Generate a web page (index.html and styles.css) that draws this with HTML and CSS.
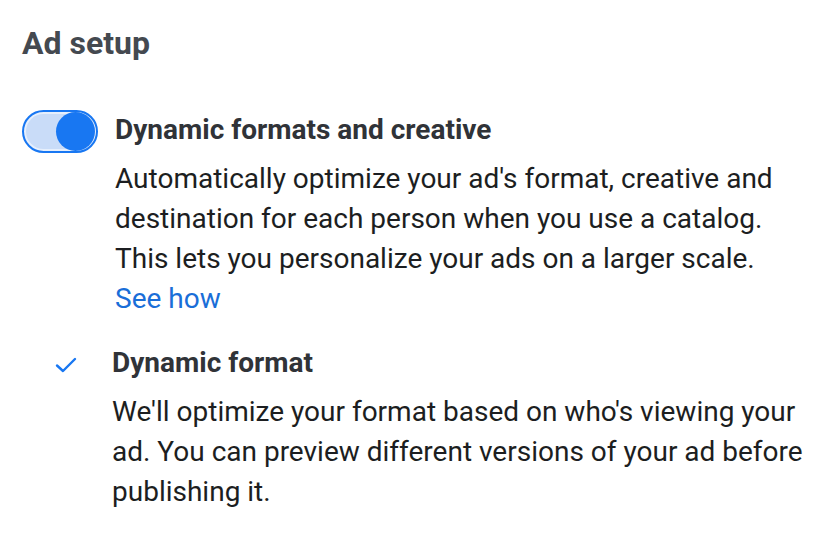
FILE: index.html
```html
<!DOCTYPE html>
<html lang="en">
<head>
    <meta charset="UTF-8">
    <meta name="viewport" content="width=device-width, initial-scale=1.0">
    <title>Ad setup</title>
    <link rel="stylesheet" href="styles.css">
</head>
<body>

    <div class="panel">
        <h2 class="panel-title">Ad setup</h2>

        <!-- Główny przełącznik -->
        <div class="option">
            <label class="switch">
                <input type="checkbox" checked>
                <span class="switch-track"><span class="switch-knob"></span></span>
            </label>
            <div class="option-body">
                <h4>Dynamic formats and creative</h4>
                <p>Automatically optimize your ad's format, creative and destination for each person when you use a catalog. This lets you personalize your ads on a larger scale.</p>
                <a href="#" class="see-how">See how</a>
            </div>
        </div>

        <!-- Podopcja -->
        <div class="sub-option">
            <svg class="check" width="22" height="16" viewBox="0 0 22 16">
                <path d="M2 8.5 L8 14 L20 2" fill="none" stroke="#1877f2" stroke-width="2.4" stroke-linecap="round" stroke-linejoin="round"/>
            </svg>
            <div class="sub-body">
                <h4>Dynamic format</h4>
                <p>We'll optimize your format based on who's viewing your ad. You can preview different versions of your ad before publishing it.</p>
            </div>
        </div>
    </div>

</body>
</html>
```

FILE: styles.css
```css
body {
    font-family: 'Roboto', sans-serif;
    margin: 0;
    padding: 0;
    background-color: #fff;
    color: #1c1e21;
}

.panel {
    padding: 22px 0 0 22px;
}

.panel-title {
    margin: 0;
    font-size: 32px;
    line-height: 42px;
    font-weight: 700;
    color: #444950;
}

.option {
    display: flex;
    align-items: flex-start;
    gap: 17px;
    margin-top: 46px;
}

.switch input {
    display: none;
}

.switch-track {
    display: flex;
    justify-content: flex-end;
    align-items: center;
    box-sizing: border-box;
    width: 76px;
    height: 43px;
    padding: 0 1px;
    border: 2px solid #1877f2;
    border-radius: 22px;
    background-color: #c9dcf8;
    box-shadow: inset 0 0 0 2px #e6effc;
    cursor: pointer;
}

.switch-knob {
    width: 39px;
    height: 39px;
    border-radius: 50%;
    background-color: #1877f2;
}

.option-body {
    width: 690px;
}

.option-body h4,
.sub-body h4 {
    margin: 0;
    font-size: 28px;
    line-height: 40px;
    font-weight: 700;
    color: #303338;
}

.option-body p,
.sub-body p {
    margin: 0;
    font-size: 28px;
    line-height: 40px;
}

.option-body p {
    margin-top: 9px;
}

.see-how {
    display: block;
    font-size: 28px;
    line-height: 40px;
    color: #1a6ed8;
    text-decoration: none;
}

.sub-option {
    display: flex;
    align-items: flex-start;
    margin-top: 24px;
}

.check {
    margin: 14px 35px 0 33px;
}

.sub-body {
    width: 705px;
}

.sub-body p {
    margin-top: 9px;
}
```
